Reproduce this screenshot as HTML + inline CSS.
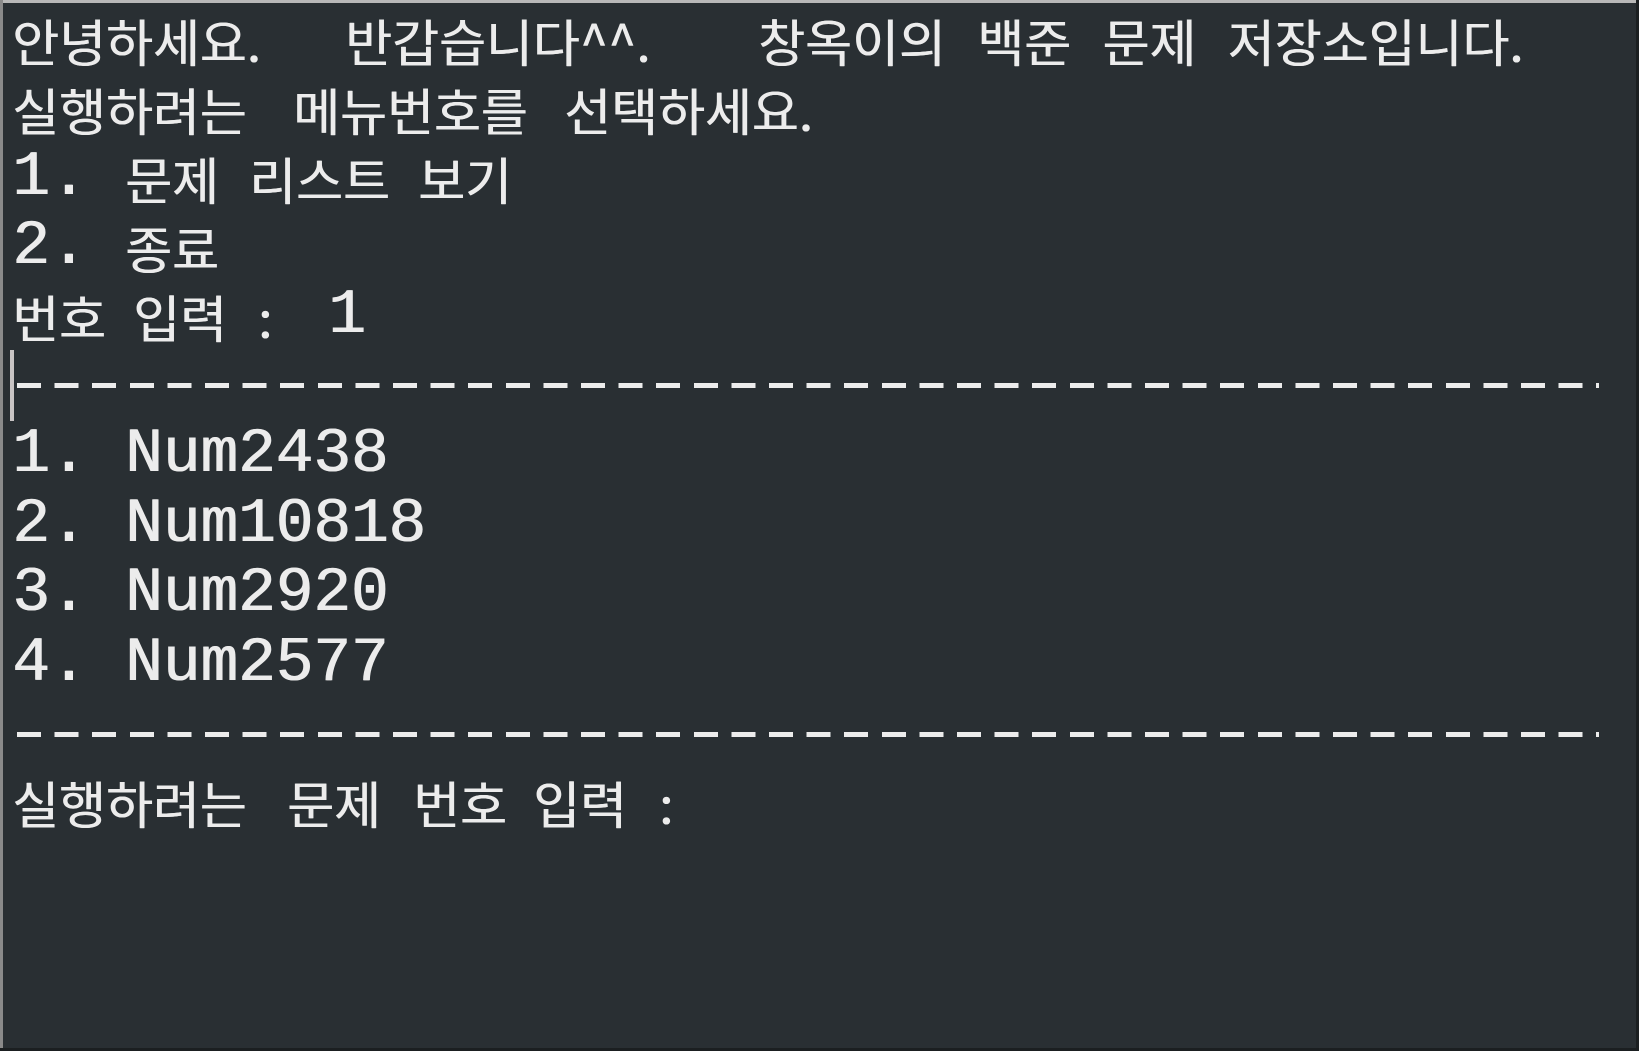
<!DOCTYPE html>
<html><head><meta charset="utf-8"><style>
html,body{margin:0;padding:0;}
body{width:1639px;height:1051px;position:relative;overflow:hidden;background:#292f33;}
.bt{position:absolute;left:0;top:0;width:1639px;height:3px;background:#b8b8b8;}
.bl{position:absolute;left:0;top:0;width:3px;height:1051px;background:#8a8a8a;}
.br{position:absolute;right:0;top:0;width:3px;height:1051px;background:#1b1f21;}
.bb{position:absolute;left:0;bottom:0;width:1639px;height:3px;background:#1b1f21;}
.s{position:absolute;white-space:pre;color:#ececec;height:70px;line-height:70px;}
.h{font-family:"Noto Sans CJK KR","NanumGothic",sans-serif;font-size:51px;letter-spacing:0px;word-spacing:20px;text-shadow:0.6px 0 0 #ececec;}
.a{font-family:"Liberation Mono",monospace;font-size:62.7px;text-shadow:1px 0 0 #ececec;}
.dash{position:absolute;left:17px;width:1582px;height:5px;background:repeating-linear-gradient(90deg,#ececec 0 24px,transparent 24px 37.6px);}
.cur{position:absolute;left:10px;top:350px;width:4px;height:71px;background:#c8c4c4;}
</style></head><body>
<div class="bt"></div><div class="bl"></div><div class="br"></div><div class="bb"></div>

<div class="s h" style="left:12px;top:5px">안녕하세요.</div>
<div class="s h" style="left:345px;top:5px">반갑습니다^^.</div>
<div class="s h" style="left:758px;top:5px">창옥이의 백준 문제 저장소입니다.</div>

<div class="s h" style="left:12px;top:74px">실행하려는</div>
<div class="s h" style="left:293px;top:74px">메뉴번호를</div>
<div class="s h" style="left:564px;top:74px">선택하세요.</div>

<div class="s a" style="left:12px;top:143px">1.</div>
<div class="s h" style="left:125px;top:143px">문제</div>
<div class="s h" style="left:249px;top:143px">리스트</div>
<div class="s h" style="left:418px;top:143px">보기</div>

<div class="s a" style="left:12px;top:212px">2.</div>
<div class="s h" style="left:125px;top:212px">종료</div>

<div class="s h" style="left:12px;top:281px">번호</div>
<div class="s h" style="left:133px;top:281px">입력</div>
<div class="s h" style="left:258px;top:281px">:</div>
<div class="s a" style="left:328px;top:281px">1</div>

<div class="cur"></div>
<div class="dash" style="top:383px"></div>

<div class="s a" style="left:12px;top:420px">1. Num2438</div>
<div class="s a" style="left:12px;top:490px">2. Num10818</div>
<div class="s a" style="left:12px;top:559px">3. Num2920</div>
<div class="s a" style="left:12px;top:629px">4. Num2577</div>

<div class="dash" style="top:732px"></div>

<div class="s h" style="left:12px;top:767px">실행하려는</div>
<div class="s h" style="left:287px;top:767px">문제</div>
<div class="s h" style="left:413px;top:767px">번호</div>
<div class="s h" style="left:533px;top:767px">입력</div>
<div class="s h" style="left:659px;top:767px">:</div>
</body></html>
